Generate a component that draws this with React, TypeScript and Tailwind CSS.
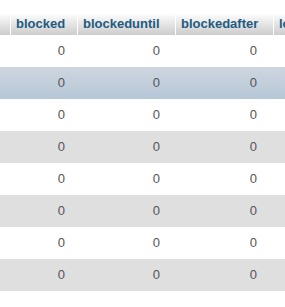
import React from 'react';

// Column setup: widths and right padding of the numbers
const columns = [
  { key: 'edge', label: '', width: 'w-[11px]', pad: 'pr-0' },
  { key: 'blocked', label: 'blocked', width: 'w-[67px]', pad: 'pr-[13px]' },
  { key: 'blockeduntil', label: 'blockeduntil', width: 'w-[98px]', pad: 'pr-[16px]' },
  { key: 'blockedafter', label: 'blockedafter', width: 'w-[98px]', pad: 'pr-[17px]' },
  { key: 'lockout', label: 'lockout', width: 'w-[80px]', pad: 'pr-3' },
];

const rows = [
  { id: 1, tone: 'odd' },
  { id: 2, tone: 'marked' },
  { id: 3, tone: 'odd' },
  { id: 4, tone: 'even' },
  { id: 5, tone: 'odd' },
  { id: 6, tone: 'even' },
  { id: 7, tone: 'odd' },
  { id: 8, tone: 'even' },
];

const rowBg: Record<string, string> = {
  odd: 'bg-white',
  even: 'bg-[#dfdfdf]',
  marked: 'bg-gradient-to-b from-[#ced6df] to-[#b6c6d7]',
};

export default function App() {
  return (
    <div className="w-[285px] h-[307px] overflow-hidden bg-white pt-[13px] font-['Liberation_Sans',Arial,sans-serif]">
      <div className="w-[400px]">
        {/* Header */}
        <div className="flex h-[22px] bg-gradient-to-b from-white to-[#cccccc]">
          {columns.map(col => (
            <div
              key={col.key}
              className={`${col.width} shrink-0 flex items-center pl-[5px] border-r border-white text-[13px] font-bold text-[#235a81] whitespace-nowrap overflow-hidden`}
            >
              {col.label}
            </div>
          ))}
        </div>

        {/* Body */}
        {rows.map(row => (
          <div key={row.id} className={`flex h-[32px] ${rowBg[row.tone]}`}>
            {columns.map((col, i) => (
              <div
                key={col.key}
                className={`${col.width} shrink-0 flex items-center justify-end ${col.pad} text-[13px] text-[#555]`}
              >
                {i > 0 && i < 4 ? '0' : ''}
              </div>
            ))}
          </div>
        ))}
      </div>
    </div>
  );
}
